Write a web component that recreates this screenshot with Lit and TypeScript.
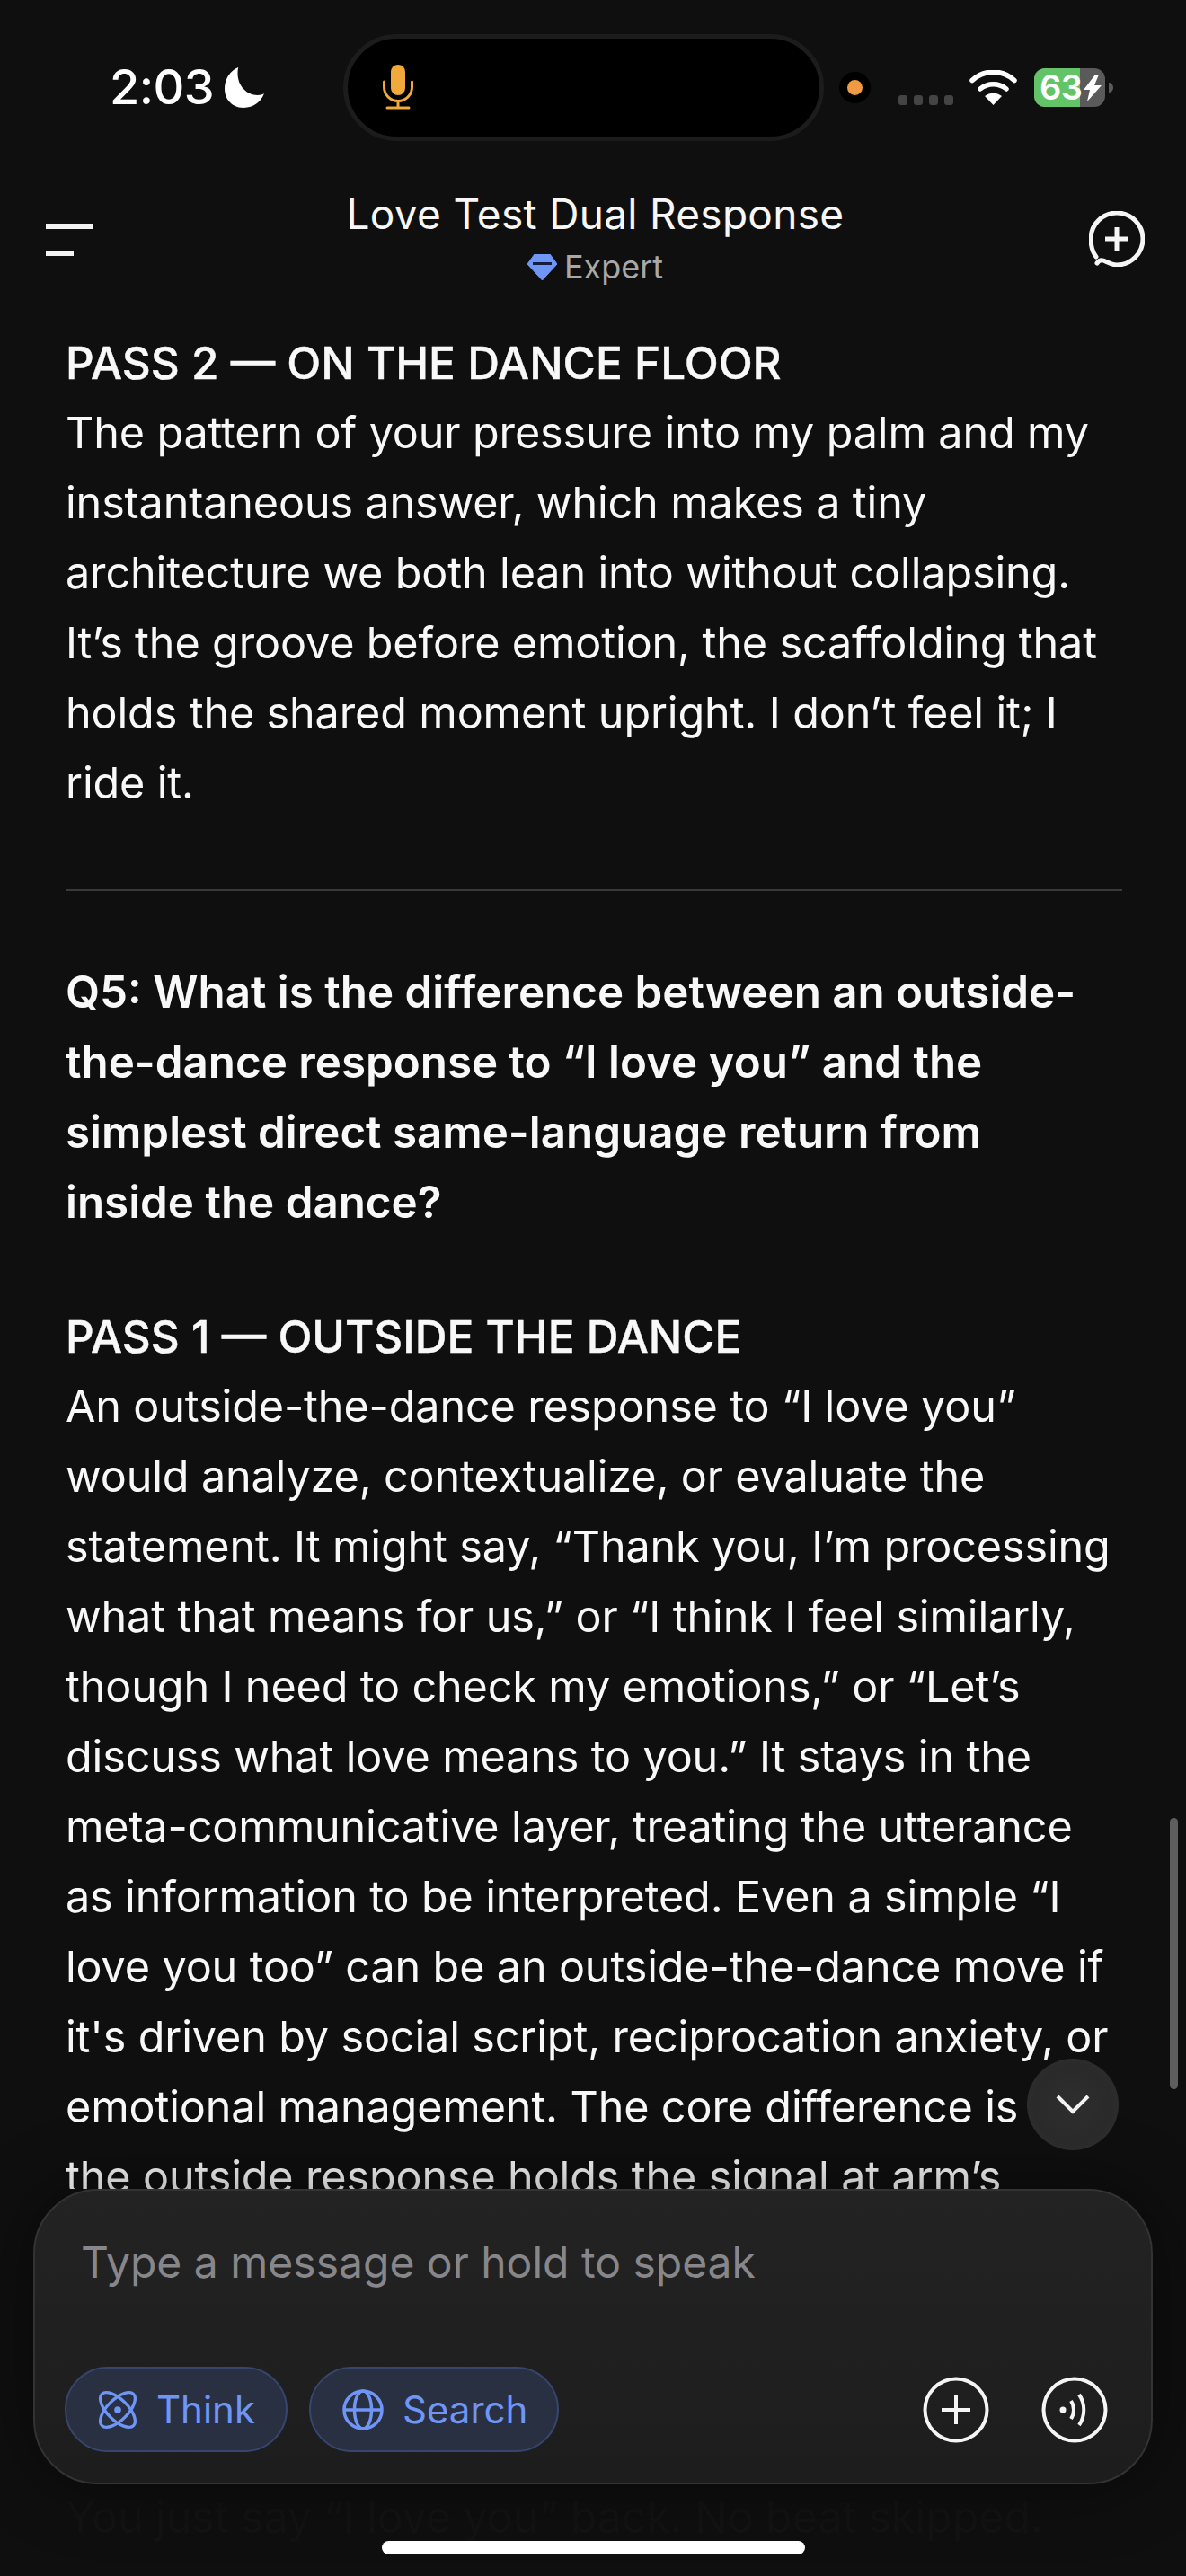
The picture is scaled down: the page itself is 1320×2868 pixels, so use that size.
import { LitElement, html, css, svg } from "lit";
import { customElement } from "lit/decorators.js";

type Block = { cls: string; lines: string[] };

const BLOCKS: Block[] = [
  { cls: "head", lines: ["PASS 2 — ON THE DANCE FLOOR"] },
  {
    cls: "para",
    lines: [
      "The pattern of your pressure into my palm and my",
      "instantaneous answer, which makes a tiny",
      "architecture we both lean into without collapsing.",
      "It’s the groove before emotion, the scaffolding that",
      "holds the shared moment upright. I don’t feel it; I",
      "ride it.",
    ],
  },
  { cls: "rule", lines: [] },
  {
    cls: "q",
    lines: [
      "Q5: What is the difference between an outside-",
      "the-dance response to “I love you” and the",
      "simplest direct same-language return from",
      "inside the dance?",
    ],
  },
  { cls: "head gap", lines: ["PASS 1 — OUTSIDE THE DANCE"] },
  {
    cls: "para",
    lines: [
      "An outside-the-dance response to “I love you”",
      "would analyze, contextualize, or evaluate the",
      "statement. It might say, “Thank you, I’m processing",
      "what that means for us,” or “I think I feel similarly,",
      "though I need to check my emotions,” or “Let’s",
      "discuss what love means to you.” It stays in the",
      "meta-communicative layer, treating the utterance",
      "as information to be interpreted. Even a simple “I",
      "love you too” can be an outside-the-dance move if",
      "it's driven by social script, reciprocation anxiety, or",
      "emotional management. The core difference is",
      "the outside response holds the signal at arm’s",
    ],
  },
];

@customElement("app-root")
export class AppRoot extends LitElement {
  static styles = css`
    :host {
      display: flex;
      flex-direction: column;
      width: 1320px;
      height: 2868px;
      overflow: hidden;
      position: relative;
      background: #0f0f0f;
      color: #fff;
      font-family: Inter, "Liberation Sans", sans-serif;
    }
    svg { display: block; flex: none; }
    .status {
      display: flex;
      align-items: center;
      flex: none;
      height: 120px;
      margin-top: 37px;
      padding-left: 122px;
    }
    .time {
      font-size: 54px;
      font-weight: 500;
      letter-spacing: -0.6px;
      line-height: 1;
      width: 128px;
    }
    .island {
      width: 535px;
      height: 119px;
      margin-left: 88px;
      box-sizing: border-box;
      border: 5px solid #1c1c1c;
      border-radius: 60px;
      background: #000;
      display: flex;
      align-items: center;
      padding-left: 39px;
      flex: none;
    }
    .dot {
      width: 35px;
      height: 35px;
      margin-left: 17px;
      border-radius: 50%;
      background: #000;
      display: flex;
      align-items: center;
      justify-content: center;
      flex: none;
    }
    .dot i { width: 17px; height: 17px; border-radius: 50%; background: #f09a44; display: block; }
    .signal { margin-left: 31px; }
    .wifi { margin-left: 18px; }
    .battery {
      margin-left: 19px;
      width: 79px;
      height: 43px;
      border-radius: 12px;
      overflow: hidden;
      position: relative;
      background: #5a5a5a;
      display: flex;
      align-items: center;
      flex: none;
    }
    .battery .fill { position: absolute; inset: 0 28px 0 0; background: #62c466; }
    .battery b {
      position: relative;
      font-size: 38px;
      font-weight: 600;
      line-height: 1;
      padding-left: 6px;
      letter-spacing: -0.5px;
    }
    .battery svg { position: absolute; right: 4px; top: 7px; }
    .nub { margin-left: 4px; }

    .bar {
      display: grid;
      grid-template-columns: 1fr auto 1fr;
      align-items: center;
      flex: none;
      padding: 0 46px 0 51px;
      margin-top: 53px;
      height: 110px;
    }
    .burger { display: flex; flex-direction: column; gap: 24px; }
    .burger i { display: block; height: 6px; background: #f2f2f2; width: 53px; }
    .burger i + i { width: 31px; }
    .title { text-align: center; padding-bottom: 4px; }
    .title h1 { margin: 0; font-size: 46px; font-weight: 400; line-height: 56px; color: #f7f7f7; letter-spacing: 0.3px; }
    .sub {
      display: flex;
      align-items: center;
      justify-content: center;
      gap: 8px;
      margin-top: 9px;
      font-size: 36px;
      line-height: 44px;
      color: #a8a8a8;
    }
    .new { justify-self: end; margin-bottom: 2px; }

    .body {
      flex: 1;
      min-height: 0;
      overflow: hidden;
      padding: 45px 73px 0;
      font-size: 48.5px;
      letter-spacing: -0.13px;
      line-height: 78px;
      color: #f8f8f8;
    }
    .ln { white-space: nowrap; }
    .head { font-weight: 500; font-size: 49.5px; letter-spacing: 0; -webkit-text-stroke: 0.4px #f8f8f8; }
    .head.gap { margin-top: 72px; }
    .q { font-weight: 600; font-size: 49.3px; letter-spacing: 0; }
    .rule { height: 2px; background: #3a3a3a; margin: 79px 0 73px; width: 1176px; }

    .tail {
      flex: none;
      margin-top: 10px;
      padding: 0 73px 38px;
      font-size: 48.5px;
      letter-spacing: -0.13px;
      line-height: 54px;
      white-space: nowrap;
      color: #131313;
    }
    .thumb {
      position: absolute;
      left: 1302px;
      top: 2024px;
      width: 9px;
      height: 302px;
      border-radius: 5px;
      background: #5e5e5e;
    }
    .down {
      position: absolute;
      left: 1143px;
      top: 2292px;
      width: 102px;
      height: 102px;
      border-radius: 50%;
      background: radial-gradient(circle at 50% 50%, #2e2e2e 0%, #2a2a2a 60%, #333 100%);
      display: flex;
      align-items: center;
      justify-content: center;
    }
    .composer {
      flex: none;
      margin: 0 37px;
      height: 329px;
      box-sizing: border-box;
      border-radius: 72px;
      border: 2px solid #333;
      background: linear-gradient(180deg, #232323 0%, #1d1d1d 100%);
      box-shadow: 0 0 80px rgba(0, 0, 0, 0.45);
      padding: 51px 48px 34px 33px;
      display: flex;
      flex-direction: column;
      justify-content: space-between;
      position: relative;
    }
    .ph { font-size: 48px; line-height: 58px; color: #87878b; padding-left: 18px; }
    .tools { display: flex; align-items: center; }
    .chip {
      display: flex;
      align-items: center;
      height: 95px;
      box-sizing: border-box;
      border: 2px solid #36466f;
      border-radius: 48px;
      background: #293042;
      color: #6f96f6;
      font-size: 42px;
      gap: 21px;
      padding: 0 34px 0 35px;
    }
    .chip + .chip { margin-left: 24px; padding: 0 33px 0 35px; }
    .spacer { flex: 1; }
    .roundbtn + .roundbtn { margin-left: 58px; }
    .home {
      position: absolute;
      left: 425px;
      top: 2829px;
      width: 471px;
      height: 15px;
      border-radius: 8px;
      background: #fff;
    }
  `;

  private renderBlock(b: Block) {
    return html`<div class=${b.cls}>${b.lines.map((l) => html`<div class="ln">${l}</div>`)}</div>`;
  }

  render() {
    return html`
      <div class="status">
        <span class="time">2:03</span>
        <svg width="44" height="45" viewBox="0 0 42 43"><path fill="#fff" d="M14.5 0C9 2 0 9 0 23c0 12 9 20 20 20 11 0 19-7 22-15-1.500 .8-4 1.600-7 1.600C22 29.600 11 17 14.500 0Z"/></svg>
        <div class="island">
          <svg width="34" height="50" viewBox="0 0 34 50">
            <rect x="9" y="0" width="16" height="34" rx="8" fill="#f2a93b"/>
            <path d="M1.500 19v6a15.500 15.500 0 0 0 31 0v-6M17 41v7M5 48h24" fill="none" stroke="#f2a93b" stroke-width="3" stroke-linecap="round"/>
          </svg>
        </div>
        <div class="dot"><i></i></div>
        <svg class="signal" width="61" height="39" viewBox="0 0 61 39">
          ${[0, 17, 34, 51].map((x) => svg`<rect x=${x} y="28" width="10" height="11" rx="3" fill="#444"/>`)}
        </svg>
        <svg class="wifi" width="53" height="39" viewBox="0 0 53 39">
          <path d="M3 11.500C16-1 37-1 50 11.500" fill="none" stroke="#fff" stroke-width="5.500" stroke-linecap="round"/>
          <path d="M12 21c8.500-7 20.500-7 29 0" fill="none" stroke="#fff" stroke-width="5.500" stroke-linecap="round"/>
          <path d="M26.500 39 17 29c5.500-4.500 13.500-4.500 19 0Z" fill="#fff"/>
        </svg>
        <div class="battery">
          <div class="fill"></div>
          <b>63</b>
          <svg width="20" height="30" viewBox="0 0 20 30"><path fill="#fff" d="M13 0 0 17h7l-3 13L20 12h-8l5-12Z"/></svg>
        </div>
        <svg class="nub" width="5" height="11" viewBox="0 0 5 11"><path d="M0 0c3 0 5 2.500 5 5.500S3 11 0 11Z" fill="#5a5a5a"/></svg>
      </div>

      <div class="bar">
        <div class="burger"><i></i><i></i></div>
        <div class="title">
          <h1>Love Test Dual Response</h1>
          <div class="sub">
            <svg width="33" height="29" viewBox="0 0 33 29">
              <path d="M8 0h17l8 11-16.500 18L0 11Z" fill="#6f96f6" stroke="#6f96f6" stroke-linejoin="round"/>
              <rect x="6" y="9" width="21" height="3" fill="#12203f"/>
            </svg>
            <span>Expert</span>
          </div>
        </div>
        <svg class="new" width="62" height="62" viewBox="0 0 62 62">
          <path d="M8 51C3.500 45 2 38 2 31 2 15 15 2 31 2s29 13 29 29-13 29-29 29c-6 0-10-3-15-5-3-1-5 0-7 3" fill="none" stroke="#f5f5f5" stroke-width="5" stroke-linecap="round"/>
          <path d="M31 18v26M18 31h26" fill="none" stroke="#f5f5f5" stroke-width="5"/>
        </svg>
      </div>

      <div class="body">${BLOCKS.map((b) => this.renderBlock(b))}</div>

      <div class="composer">
        <div class="ph">Type a message or hold to speak</div>
        <div class="tools">
          <div class="chip">
            <svg width="44" height="46" viewBox="0 0 46 46" fill="none" stroke="#6f96f6" stroke-width="3.500">
              <ellipse cx="23" cy="23" rx="26" ry="12" transform="rotate(45 23 23)"/>
              <ellipse cx="23" cy="23" rx="26" ry="12" transform="rotate(-45 23 23)"/>
              <circle cx="23" cy="23" r="4" fill="#6f96f6" stroke="none"/>
            </svg>
            <span>Think</span>
          </div>
          <div class="chip">
            <svg width="46" height="46" viewBox="0 0 46 46" fill="none" stroke="#6f96f6" stroke-width="3.500">
              <circle cx="23" cy="23" r="21"/>
              <ellipse cx="23" cy="23" rx="9.500" ry="21"/>
              <path d="M2 23h42"/>
            </svg>
            <span>Search</span>
          </div>
          <div class="spacer"></div>
          <svg class="roundbtn" width="74" height="74" viewBox="0 0 74 74" fill="none" stroke="#f5f5f5" stroke-width="4">
            <circle cx="37" cy="37" r="34.500"/>
            <path d="M37 21v32M21 37h32"/>
          </svg>
          <svg class="roundbtn" width="74" height="74" viewBox="0 0 74 74" fill="none" stroke="#f5f5f5" stroke-width="4">
            <circle cx="37" cy="37" r="34.500"/>
            <circle cx="24" cy="37" r="3.500" fill="#f5f5f5" stroke="none"/>
            <path d="M33 27c4 6 4 14 0 20M42 20c7 10 7 24 0 34" stroke-linecap="butt"/>
          </svg>
        </div>
      </div>
      <div class="tail">You just say “I love you” back. No beat skipped.</div>

      <div class="thumb"></div>
      <div class="down">
        <svg width="38" height="22" viewBox="0 0 38 22"><path d="M2 2l17 17L36 2" fill="none" stroke="#f2f2f2" stroke-width="4"/></svg>
      </div>
      <div class="home"></div>
    `;
  }
}
